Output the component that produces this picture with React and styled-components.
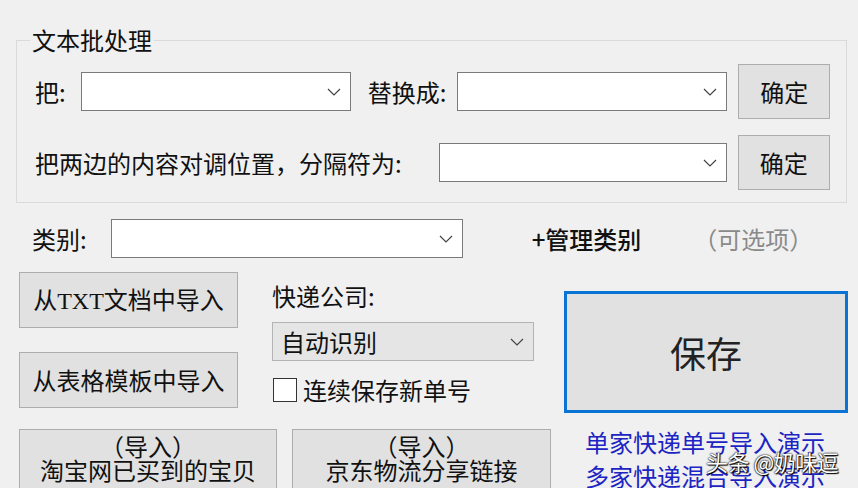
import styled, { createGlobalStyle } from 'styled-components';

const GlobalStyle = createGlobalStyle`
  html, body {
    margin: 0;
    padding: 0;
    background: #f0f0f0;
  }
  * {
    box-sizing: border-box;
  }
`;

const Window = styled.div`
  width: 858px;
  height: 488px;
  overflow: hidden;
  position: relative;
  background: #f0f0f0;
  font-family: 'Noto Sans CJK SC', 'Noto Sans', sans-serif;
  font-size: 24px;
  color: #111;
  display: flex;
  flex-direction: column;
`;

const GroupBox = styled.fieldset`
  margin: 25px 11px 0 16px;
  padding: 9px 17px 12px 18px;
  border: 1px solid #dadada;
  display: flex;
  flex-direction: column;
  gap: 16px;
  min-width: 0;
`;

const Legend = styled.legend`
  padding: 0 2px;
  margin-left: -5px;
  line-height: 30px;
  font-size: 24px;
`;

const Row = styled.div`
  display: flex;
  align-items: center;
  height: 55px;
`;

const Label = styled.span`
  line-height: 30px;
  white-space: nowrap;
  margin-right: ${(p) => p.$mr || 0}px;
  color: ${(p) => p.$muted ? '#8a8a8a' : '#111'};
  font-weight: ${(p) => p.$bold ? 500 : 400};
`;

const Combo = styled.div`
  width: ${(p) => p.$w}px;
  height: 39px;
  flex: none;
  display: flex;
  align-items: center;
  justify-content: space-between;
  padding: 0 9px 0 8px;
  background: ${(p) => p.$flat ? '#e5e5e5' : '#fff'};
  border: 1px solid ${(p) => p.$flat ? '#b4b4b4' : '#7a7a7a'};
  margin-right: ${(p) => p.$mr || 0}px;
`;

const Chevron = () => (
  <svg width="14" height="8" viewBox="0 0 14 8">
    <path d="M1 1 L7 7 L13 1" fill="none" stroke="#444" strokeWidth="1.2" />
  </svg>
);

const Button = styled.button`
  width: ${(p) => p.$w}px;
  height: ${(p) => p.$h}px;
  flex: none;
  background: #e1e1e1;
  border: 1px solid #adadad;
  font-family: inherit;
  font-size: 24px;
  color: #111;
  padding: 0;
  line-height: 30px;
  cursor: default;
`;

const Body = styled.div`
  display: flex;
  flex-direction: column;
  padding: 16px 0 0 19px;
`;

const CategoryRow = styled.div`
  display: flex;
  align-items: center;
  height: 39px;
  padding-left: 13px;
`;

const Main = styled.div`
  display: flex;
  align-items: flex-start;
  margin-top: 14px;
`;

const Column = styled.div`
  display: flex;
  flex-direction: column;
  width: ${(p) => p.$w}px;
  margin-right: ${(p) => p.$mr || 0}px;
  gap: ${(p) => p.$gap || 0}px;
`;

const CompanyLabel = styled.div`
  line-height: 30px;
  margin-top: 9px;
`;

const CheckRow = styled.label`
  display: flex;
  align-items: center;
  gap: 6px;
  margin-top: 14px;
  margin-left: 1px;
  line-height: 30px;
`;

const CheckBox = styled.span`
  width: 24px;
  height: 24px;
  background: #fff;
  border: 1px solid #333;
  flex: none;
`;

const SaveButton = styled.button`
  margin-top: 19px;
  height: 122px;
  width: 284px;
  background: #e1e1e1;
  border: 3px solid #0a74d4;
  font-family: inherit;
  font-size: 36px;
  color: #222;
  cursor: default;
`;

const BottomRow = styled.div`
  display: flex;
  margin-top: 16px;
  gap: 15px;
`;

const TallButton = styled(Button)`
  height: 70px;
  line-height: 24px;
  padding-top: 4px;
  display: flex;
  flex-direction: column;
  align-items: center;
  justify-content: flex-start;
`;

const Links = styled.div`
  margin-left: 19px;
  display: flex;
  flex-direction: column;
  color: #1c24c4;
  line-height: 34px;
  margin-top: -4px;
`;

const Mono = styled.span`
  font-family: 'Liberation Serif', serif;
`;

const Watermark = styled.div`
  position: absolute;
  left: 706px;
  top: 446px;
  font-size: 22px;
  line-height: 30px;
  color: #fff;
  text-shadow: 0 0 2px #000, 0 0 1px #000, 1px 1px 1px #000;
  letter-spacing: -0.5px;
`;

export default function App() {
  return (
    <>
      <GlobalStyle />
      <Window>
        <GroupBox>
          <Legend>文本批处理</Legend>
          <Row>
            <Label $mr={15}>把:</Label>
            <Combo $w={270} $mr={17}><span /><Chevron /></Combo>
            <Label $mr={11}>替换成:</Label>
            <Combo $w={270} $mr={11}><span /><Chevron /></Combo>
            <Button $w={92} $h={55}>确定</Button>
          </Row>
          <Row>
            <Label $mr={37}>把两边的内容对调位置，分隔符为:</Label>
            <Combo $w={288} $mr={11}><span /><Chevron /></Combo>
            <Button $w={92} $h={55}>确定</Button>
          </Row>
        </GroupBox>
        <Body>
          <CategoryRow>
            <Label $mr={24}>类别:</Label>
            <Combo $w={352} $mr={69}><span /><Chevron /></Combo>
            <Label $mr={52} $bold>+管理类别</Label>
            <Label $muted>（可选项）</Label>
          </CategoryRow>
          <Main>
            <Column $w={219} $mr={34} $gap={24}>
              <Button $w={219} $h={56}>从<Mono>TXT</Mono>文档中导入</Button>
              <Button $w={219} $h={56}>从表格模板中导入</Button>
            </Column>
            <Column $w={262} $mr={30}>
              <CompanyLabel>快递公司:</CompanyLabel>
              <Combo $w={262} $flat style={{ marginTop: 11 }}>
                <span>自动识别</span>
                <Chevron />
              </Combo>
              <CheckRow>
                <CheckBox />
                连续保存新单号
              </CheckRow>
            </Column>
            <Column $w={284}>
              <SaveButton>保存</SaveButton>
            </Column>
          </Main>
          <BottomRow>
            <TallButton $w={258}>
              <span>（导入）</span>
              <span>淘宝网已买到的宝贝</span>
            </TallButton>
            <TallButton $w={259}>
              <span>（导入）</span>
              <span>京东物流分享链接</span>
            </TallButton>
            <Links>
              <span>单家快递单号导入演示</span>
              <span>多家快递混合导入演示</span>
            </Links>
          </BottomRow>
        </Body>
        <Watermark>头条 @奶味逗</Watermark>
      </Window>
    </>
  );
}
